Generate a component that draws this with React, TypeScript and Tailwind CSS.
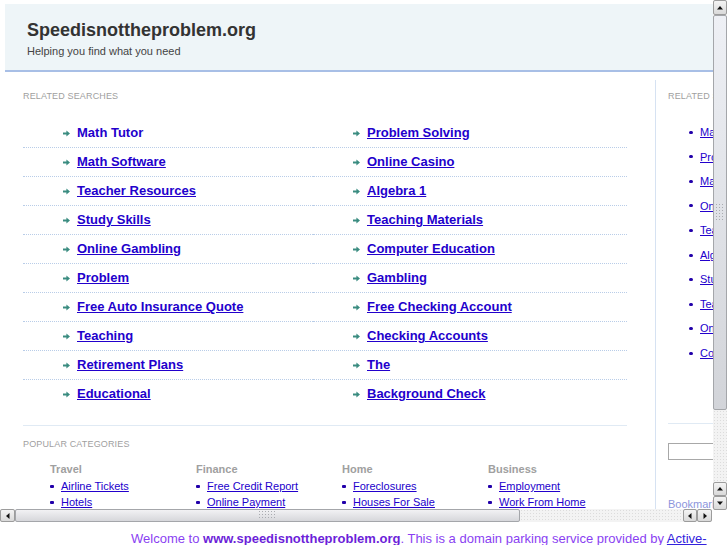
import React from 'react';

const related = [
  ['Math Tutor', 'Problem Solving'],
  ['Math Software', 'Online Casino'],
  ['Teacher Resources', 'Algebra 1'],
  ['Study Skills', 'Teaching Materials'],
  ['Online Gambling', 'Computer Education'],
  ['Problem', 'Gambling'],
  ['Free Auto Insurance Quote', 'Free Checking Account'],
  ['Teaching', 'Checking Accounts'],
  ['Retirement Plans', 'The'],
  ['Educational', 'Background Check'],
];

const sideLinks = [
  'Math Tutor',
  'Problem Solving',
  'Math Software',
  'Online Casino',
  'Teacher Resources',
  'Algebra 1',
  'Study Skills',
  'Teaching Materials',
  'Online Gambling',
  'Computer Education',
];

const categories = [
  { title: 'Travel', items: ['Airline Tickets', 'Hotels'] },
  { title: 'Finance', items: ['Free Credit Report', 'Online Payment'] },
  { title: 'Home', items: ['Foreclosures', 'Houses For Sale'] },
  { title: 'Business', items: ['Employment', 'Work From Home'] },
];

const Arrow = () => (
  <svg width="7" height="7" viewBox="0 0 7 7" className="shrink-0">
    <path d="M0 2.4H3.4V0.4L7 3.5L3.4 6.6V4.6H0Z" fill="#3a8c80" />
  </svg>
);

// small scrollbar button with a black triangle
const ScrollBtn = ({ dir, className = '' }: { dir: 'up' | 'down' | 'left' | 'right'; className?: string }) => {
  const d = {
    up: 'M1 5.5L4 2L7 5.5Z',
    down: 'M1 2.5L4 6L7 2.5Z',
    left: 'M5.5 1L2 4L5.5 7Z',
    right: 'M2.5 1L6 4L2.5 7Z',
  }[dir];
  return (
    <div
      className={`flex shrink-0 items-center justify-center rounded-[2px] border border-[#9c9c9c] bg-gradient-to-b from-[#f4f4f4] to-[#d9d9d9] ${className}`}
    >
      <svg width="8" height="8" viewBox="0 0 8 8">
        <path d={d} fill="#111" />
      </svg>
    </div>
  );
};

const Grip = ({ vertical }: { vertical?: boolean }) => {
  const dots = [];
  const cols = vertical ? 3 : 6;
  const rows = vertical ? 6 : 3;
  for (let r = 0; r < rows; r++)
    for (let c = 0; c < cols; c++) dots.push(<rect key={`${r}-${c}`} x={c * 3} y={r * 3} width="1" height="1" fill="#a9abb0" />);
  return (
    <svg width={cols * 3} height={rows * 3}>
      {dots}
    </svg>
  );
};

export default function App() {
  return (
    <div className="w-[727px] h-[545px] overflow-hidden bg-white font-['Liberation_Sans',Arial,sans-serif]">
      <div className="flex h-[522px]">
        <div className="flex w-[713px] flex-col">
          {/* page viewport */}
          <div className="h-[509px] overflow-hidden">
            <div className="w-[880px] pl-[5px] pt-[4px]">
              <div className="h-[68px] border-b-2 border-[#a8bfe6] bg-[#eef5f8] pl-[22px] pt-[15px]">
                <div className="text-[18px] font-bold leading-[22px] text-[#333]">Speedisnottheproblem.org</div>
                <div className="mt-[3px] text-[11px] leading-[14px] text-[#444]">Helping you find what you need</div>
              </div>

              <div className="mt-[8px] flex">
                <div className="ml-[18px] w-[604px] shrink-0 pt-[11px]">
                  <div className="text-[9px] leading-[11px] tracking-[0.15px] text-[#a0a0a0]">RELATED SEARCHES</div>
                  <div className="mt-[17px] grid grid-cols-[290px_314px]">
                    {related.map((pair, i) =>
                      pair.map((label, j) => (
                        <div
                          key={`${i}-${j}`}
                          className={`flex h-[29px] items-start pl-[40px] ${
                            i < related.length - 1 ? 'border-b border-dotted border-[#b9cde8]' : ''
                          }`}
                        >
                          <div className="flex h-[28px] items-center gap-[7px]">
                            <Arrow />
                            <a
                              href="#"
                              className={`text-[13px] font-bold leading-[28px] text-[#2200cc] ${
                                i === 0 && j === 0 ? 'no-underline' : 'underline'
                              }`}
                            >
                              {label}
                            </a>
                          </div>
                        </div>
                      ))
                    )}
                  </div>
                  <div className="mt-[16px] h-px bg-[#e0eaf4]" />
                  <div className="mt-[13px] text-[9px] leading-[11px] tracking-[0.15px] text-[#a0a0a0]">POPULAR CATEGORIES</div>
                  <div className="mt-[12px] flex pl-[27px]">
                    {categories.map((cat) => (
                      <div key={cat.title} className="w-[146px] shrink-0">
                        <div className="text-[11px] font-bold leading-[14px] text-[#a0a0a0]">{cat.title}</div>
                        <ul className="mt-[2px]">
                          {cat.items.map((it) => (
                            <li key={it} className="flex items-center gap-[7px] text-[11px] leading-[16px]">
                              <span className="h-[3px] w-[4px] rounded-[1px] bg-[#2200aa]" />
                              <a href="#" className="text-[#2200cc] underline">
                                {it}
                              </a>
                            </li>
                          ))}
                        </ul>
                      </div>
                    ))}
                  </div>
                </div>

                <div className="ml-[28px] h-[430px] border-l border-[#d6e2f2] pl-[12px] pt-[11px]">
                  <div className="text-[9px] leading-[11px] tracking-[0.15px] text-[#a0a0a0]">RELATED SEARCHES</div>
                  <ul className="mt-[18px] pl-[21px]">
                    {sideLinks.map((s, i) => (
                      <li key={i} className="flex h-[24.56px] items-center gap-[7px] text-[11px]">
                        <span className="h-[3px] w-[4px] rounded-full bg-[#2200aa]" />
                        <a href="#" className="text-[#2200cc] underline">
                          {s}
                        </a>
                      </li>
                    ))}
                  </ul>
                  <div className="mt-[58px] h-px w-[180px] bg-[#e0eaf4]" />
                  <div className="mt-[19px] h-[17px] w-[160px] border border-[#a8a8a8] bg-white" />
                  <div className="mt-[37px] text-[11px] leading-[14px] text-[#8c95dc]">Bookmark this page</div>
                </div>
              </div>
            </div>
          </div>

          {/* horizontal scrollbar */}
          <div className="flex h-[13px] w-[712px] bg-[#f3f3f3]">
            <ScrollBtn dir="left" className="h-[13px] w-[15px]" />
            <div className="flex h-[13px] w-[505px] shrink-0 items-center justify-center rounded-[2px] border border-[#a4a6aa] bg-gradient-to-b from-[#f2f2f4] to-[#d6d7db]">
              <Grip />
            </div>
            <div className="h-[13px] flex-1 bg-[radial-gradient(#dcdcdc_0.6px,transparent_0.7px)] bg-[length:3px_3px]" />
            <ScrollBtn dir="left" className="h-[13px] w-[14px]" />
            <ScrollBtn dir="right" className="h-[13px] w-[15px]" />
          </div>
        </div>

        {/* vertical scrollbar */}
        <div className="flex h-[510px] w-[14px] flex-col bg-[#f3f3f3]">
          <ScrollBtn dir="up" className="h-[15px] w-[14px]" />
          <div className="flex h-[395px] w-[14px] shrink-0 items-center justify-center rounded-[2px] border border-[#a4a6aa] bg-gradient-to-b from-[#eef0f5] to-[#d2d4d9]">
            <Grip vertical />
          </div>
          <div className="flex-1 bg-[radial-gradient(#dcdcdc_0.6px,transparent_0.7px)] bg-[length:3px_3px]" />
          <ScrollBtn dir="up" className="h-[14px] w-[14px]" />
          <ScrollBtn dir="down" className="h-[14px] w-[14px]" />
        </div>
      </div>

      <div className="h-[23px] whitespace-nowrap pl-[131px] pt-[9px] text-[13px] leading-[15px] text-[#8a3ff2]">
        Welcome to <b className="text-[#6c1fd9]">www.speedisnottheproblem.org</b>. This is a domain parking service provided by{' '}
        <a href="#" className="text-[#3322dd] underline">
          Active-
        </a>
      </div>
    </div>
  );
}
